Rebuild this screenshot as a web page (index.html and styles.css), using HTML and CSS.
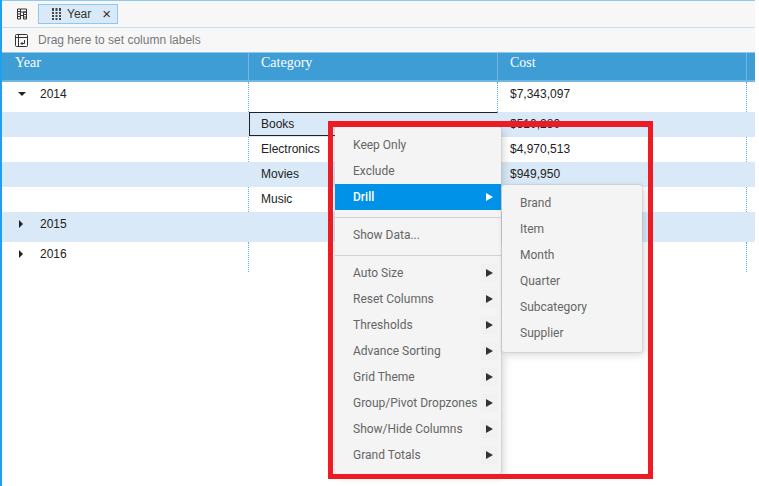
FILE: index.html
```html
<!DOCTYPE html>
<html lang="en">
<head>
    <meta charset="UTF-8">
    <meta name="viewport" content="width=device-width, initial-scale=1.0">
    <title>Pivot Grid</title>
    <link rel="stylesheet" href="styles.css">
</head>
<body>
    <div class="page">
        <div class="dropzone dropzone-rows">
            <svg class="zone-icon" width="12" height="12" viewBox="0 0 12 12">
                <path d="M1.500 1h3v10h-3zM4.500 1h6v3h-6zM7.500 4h3v7h-3z" fill="none" stroke="#333"/>
                <path d="M1.500 3.500h3M1.500 6h3M1.500 8.500h3M7.500 6.500h3M7.500 9h3M4.500 7.500h3" stroke="#333"/>
            </svg>
            <div class="chip">
                <svg class="chip-icon" width="10" height="12" viewBox="0 0 10 12">
                    <path d="M1 0v12M4.500 0v12M8 0v12" stroke="#444" stroke-width="2"/>
                    <path d="M0 3.500h10M0 6.500h10M0 9.500h10" stroke="#d9e9f7"/>
                </svg>
                <span>Year</span>
                <span class="chip-close">×</span>
            </div>
        </div>
        <div class="dropzone dropzone-cols">
            <svg class="zone-icon" width="13" height="13" viewBox="0 0 13 13">
                <rect x="0.500" y="0.500" width="12" height="12" rx="1" fill="none" stroke="#333"/>
                <path d="M0.500 3.500h12M3.500 0.500v12" fill="none" stroke="#333"/>
                <path d="M9.500 6v3.500H6M7.500 11L6 9.500 7.500 8" fill="none" stroke="#333"/>
            </svg>
            <span class="zone-label">Drag here to set column labels</span>
        </div>

        <div class="grid">
            <div class="head-row">
                <div class="head-cell">Year</div>
                <div class="head-cell">Category</div>
                <div class="head-cell">Cost</div>
            </div>
            <div class="row row-group">
                <div class="cell"><span class="arrow-down"></span>2014</div>
                <div class="cell"></div>
                <div class="cell">$7,343,097</div>
            </div>
            <div class="row row-alt">
                <div class="cell"></div>
                <div class="cell cell-selected">Books</div>
                <div class="cell">$510,280</div>
            </div>
            <div class="row">
                <div class="cell"></div>
                <div class="cell">Electronics</div>
                <div class="cell">$4,970,513</div>
            </div>
            <div class="row row-alt">
                <div class="cell"></div>
                <div class="cell">Movies</div>
                <div class="cell">$949,950</div>
            </div>
            <div class="row">
                <div class="cell"></div>
                <div class="cell">Music</div>
                <div class="cell"></div>
            </div>
            <div class="row row-group row-alt">
                <div class="cell"><span class="arrow-right"></span>2015</div>
                <div class="cell"></div>
                <div class="cell"></div>
            </div>
            <div class="row row-group">
                <div class="cell"><span class="arrow-right"></span>2016</div>
                <div class="cell"></div>
                <div class="cell"></div>
            </div>
        </div>

        <div class="menu menu-main">
            <div class="menu-item">Keep Only</div>
            <div class="menu-item">Exclude</div>
            <div class="menu-item menu-active">Drill<span class="sub-arrow"></span></div>
            <div class="menu-sep"></div>
            <div class="menu-item">Show Data...</div>
            <div class="menu-sep"></div>
            <div class="menu-item">Auto Size<span class="sub-arrow"></span></div>
            <div class="menu-item">Reset Columns<span class="sub-arrow"></span></div>
            <div class="menu-item">Thresholds<span class="sub-arrow"></span></div>
            <div class="menu-item">Advance Sorting<span class="sub-arrow"></span></div>
            <div class="menu-item">Grid Theme<span class="sub-arrow"></span></div>
            <div class="menu-item">Group/Pivot Dropzones<span class="sub-arrow"></span></div>
            <div class="menu-item">Show/Hide Columns<span class="sub-arrow"></span></div>
            <div class="menu-item">Grand Totals<span class="sub-arrow"></span></div>
        </div>
        <div class="menu menu-sub">
            <div class="menu-item">Brand</div>
            <div class="menu-item">Item</div>
            <div class="menu-item">Month</div>
            <div class="menu-item">Quarter</div>
            <div class="menu-item">Subcategory</div>
            <div class="menu-item">Supplier</div>
        </div>

        <div class="highlight"></div>
    </div>
</body>
</html>
```

FILE: styles.css
```css
html, body { margin: 0; padding: 0; background: #fff; overflow: hidden; }
body { font-family: "Liberation Sans", Arial, sans-serif; font-size: 12px; color: #222; }

.page {
    position: relative;
    width: 759px;
    height: 486px;
    box-sizing: border-box;
    border-left: 2px solid #1ea0f2;
    overflow: hidden;
}

.dropzone {
    display: flex;
    align-items: center;
    width: 753px;
    background: #f7f7f7;
    box-sizing: border-box;
}
.dropzone-rows {
    height: 28px;
    border-top: 1px solid #8cc8f0;
    border-bottom: 1px solid #c4dff2;
    padding-left: 14px;
}
.dropzone-cols { height: 24px; padding-left: 13px; }
.zone-label { margin-left: 10px; color: #777; }

.chip {
    display: flex;
    align-items: center;
    height: 20px;
    width: 80px;
    margin-left: 10px;
    padding-left: 13px;
    box-sizing: border-box;
    background: #d9e9f7;
    border: 1px solid #8cc8f0;
    color: #333;
}
.chip-icon { margin-right: 5px; }
.chip-close { margin-left: 11px; font-size: 15px; line-height: 12px; }

.head-row {
    display: grid;
    grid-template-columns: 247px 249px 249px;
    height: 30px;
    width: 753px;
    box-sizing: border-box;
    background: #3d9dd4;
    border-top: 1px solid #8cc8f0;
    border-bottom: 2px solid #74b5e0;
}
.head-cell {
    font-family: "Liberation Serif", "Times New Roman", serif;
    font-size: 14px;
    color: #fff;
    padding: 2px 12px 0 12px;
    line-height: 16px;
    border-right: 1px solid #74b5e0;
}
.head-cell:first-child { padding-left: 13px; }

.row {
    display: grid;
    grid-template-columns: 247px 249px 249px;
    height: 25px;
    width: 753px;
    background: #fff;
}
.row-group { height: 30px; }
.row-alt { background: #d9e9f7; }
.cell {
    display: flex;
    align-items: center;
    padding: 0 0 2px 12px;
    border-right: 1px dotted #4fb3f2;
}
.row-group .cell { padding-bottom: 6px; }
.row-alt .cell { border-right-color: transparent; }
.cell-selected {
    height: 24px;
    box-sizing: border-box;
    border: 1px solid #222;
    padding: 0 0 0 11px;
}

.arrow-down {
    width: 0;
    height: 0;
    margin: 0 14px 0 4px;
    border-left: 4px solid transparent;
    border-right: 4px solid transparent;
    border-top: 4px solid #222;
}
.arrow-right {
    width: 0;
    height: 0;
    margin: 0 17px 0 5px;
    border-top: 4px solid transparent;
    border-bottom: 4px solid transparent;
    border-left: 4px solid #222;
}

.menu {
    position: absolute;
    background: #f4f4f4;
    border-radius: 2px;
    box-shadow: 0 0 2px #aaa, 3px 3px 8px rgba(0, 0, 0, 0.15);
    font-family: Roboto, "Noto Sans", sans-serif;
    font-size: 12px;
    color: #666;
    padding-top: 5px;
    box-sizing: border-box;
}
.menu-main { left: 333px; top: 127px; width: 166px; height: 347px; }
.menu-sub { left: 500px; top: 185px; width: 140px; height: 167px; }

.menu-item {
    position: relative;
    height: 26px;
    line-height: 26px;
    padding-left: 18px;
}
.menu-active { background: #0092e8; color: #fff; font-weight: 500; }
.menu-sep { height: 1px; margin: 7px 0 4px; background: #d2d2d2; }

.sub-arrow {
    position: absolute;
    left: 146px;
    top: 4px;
    width: 17px;
    height: 18px;
    background: #f1f1f1;
}
.sub-arrow::after {
    content: "";
    position: absolute;
    left: 5px;
    top: 5px;
    border-top: 4px solid transparent;
    border-bottom: 4px solid transparent;
    border-left: 7px solid #333;
}
.menu-active .sub-arrow { background: transparent; }
.menu-active .sub-arrow::after { border-left-color: #fff; }

.highlight {
    position: absolute;
    left: 326px;
    top: 121px;
    width: 325px;
    height: 358px;
    box-sizing: border-box;
    border: 5px solid #ed1c24;
    border-top-width: 6px;
}
```
